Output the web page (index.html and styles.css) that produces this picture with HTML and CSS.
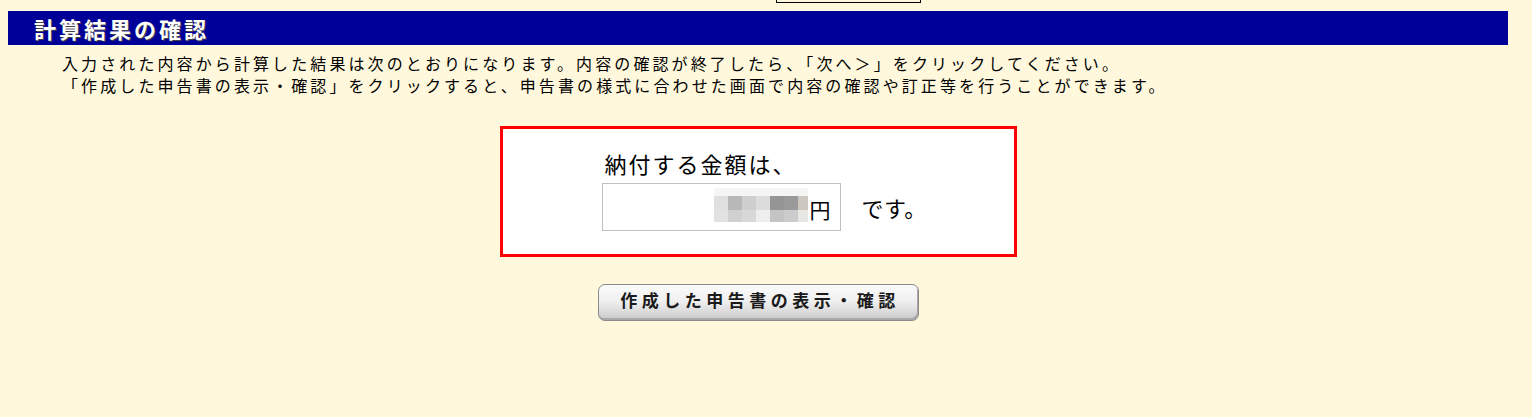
FILE: index.html
```html
<!DOCTYPE html>
<html lang="ja">
<head>
<meta charset="utf-8">
<title>計算結果の確認</title>
<link rel="stylesheet" href="styles.css">
</head>
<body>
<div class="topstub"></div>
<h1 class="titlebar">計算結果の確認</h1>
<div class="intro">
  <p>入力された内容から計算した結果は次のとおりになります。内容の確認が終了したら、「次へ＞」をクリックしてください。</p>
  <p>「作成した申告書の表示・確認」をクリックすると、申告書の様式に合わせた画面で内容の確認や訂正等を行うことができます。</p>
</div>
<div class="result">
  <div class="result-inner">
    <div class="label">納付する金額は、</div>
    <div class="amount-row">
      <div class="amount">
        <div class="mosaic">
          <span class="m1"></span><span class="m1"></span><span class="m1"></span><span class="m1"></span><span class="m1"></span><span class="m1"></span><span class="m1"></span>
          <span class="c1"></span><span class="c2"></span><span class="c3"></span><span class="c4"></span><span class="c5"></span><span class="c6"></span><span class="c7"></span>
          <span class="d1"></span><span class="d2"></span><span class="d3"></span><span class="d4"></span><span class="d5"></span><span class="d6"></span><span class="d7"></span>
        </div>
        <span class="yen">円</span>
      </div>
      <span class="desu">です。</span>
    </div>
  </div>
</div>
<div class="btn-wrap">
  <button class="btn" type="button">作成した申告書の表示・確認</button>
</div>
</body>
</html>
```
FILE: styles.css
```css
html, body {
  margin: 0;
  padding: 0;
  background: #fff8dc;
}
body {
  padding: 0 8px;
  font-family: "Noto Sans CJK JP", "Noto Sans", sans-serif;
  color: #000;
  width: 1500px;
}
.topstub {
  width: 143px;
  height: 2px;
  margin-left: 768px;
  border: 1px solid #000;
  border-top: 0;
}
.titlebar {
  margin: 8px 0 0;
  height: 34px;
  background: #000099;
  color: #fff;
  font-size: 22px;
  font-weight: bold;
  line-height: 34px;
  padding-left: 26px;
  letter-spacing: 3px;
  text-shadow: 1px 1px 0 #444;
}
.intro {
  padding-left: 54px;
  margin-top: 7px;
  font-size: 16px;
  line-height: 22px;
  letter-spacing: 3.1px;
}
.intro p {
  margin: 0;
}
.result {
  width: 511px;
  height: 125px;
  margin: 30px auto 0;
  border: 3px solid #ff0000;
  background: #fff;
}
.result-inner {
  padding: 20px 0 0 99px;
}
.label {
  font-size: 22px;
  line-height: 28px;
  padding-left: 3px;
  letter-spacing: 2px;
}
.amount-row {
  margin-top: 6px;
  display: flex;
  align-items: flex-end;
}
.amount {
  width: 237px;
  height: 46px;
  border: 1px solid #c0c0c0;
  display: flex;
  justify-content: flex-end;
  align-items: flex-start;
}
.mosaic {
  margin-top: 4px;
  display: grid;
  grid-template-columns: 14px 14px 14px 14px 14px 14px 10px;
  grid-template-rows: 8px 14px 12px;
}
.mosaic span { display: block; }
.m1 { background: #f5f5f5; }
.c1 { background: #e0e0e0; }
.c2 { background: #b8b8b8; }
.c3 { background: #cfcfcf; }
.c4 { background: #dcdcdc; }
.c5 { background: #959595; }
.c6 { background: #9a9a9a; }
.c7 { background: #ccc8c0; }
.d1 { background: #e2e2e2; }
.d2 { background: #d0d0d0; }
.d3 { background: #d8d8d8; }
.d4 { background: #eeeeee; }
.d5 { background: #c4c4c4; }
.d6 { background: #cccccc; }
.d7 { background: #e6e6e2; }
.yen {
  font-size: 21px;
  line-height: 28px;
  margin-top: 11px;
  margin-left: 2px;
  margin-right: 9px;
}
.desu {
  font-size: 22px;
  line-height: 28px;
  margin-left: 21px;
  margin-bottom: 10px;
  letter-spacing: 0.5px;
}
.btn-wrap {
  margin-top: 27px;
  display: flex;
  justify-content: center;
}
.btn {
  width: 321px;
  height: 37px;
  border: 1px solid #8a8a8a;
  border-radius: 7px;
  background: linear-gradient(#fbfbfb 0%, #f0f0f0 45%, #dcdcdc 75%, #c8c8c8 100%);
  box-shadow: inset -1px -2px 0 #a8a8a8;
  font-family: "Noto Sans CJK JP", sans-serif;
  font-size: 17px;
  font-weight: bold;
  color: #1a1a1a;
  letter-spacing: 4.5px;
  padding: 0 0 6px 4px;
  line-height: 20px;
  cursor: pointer;
}
```
